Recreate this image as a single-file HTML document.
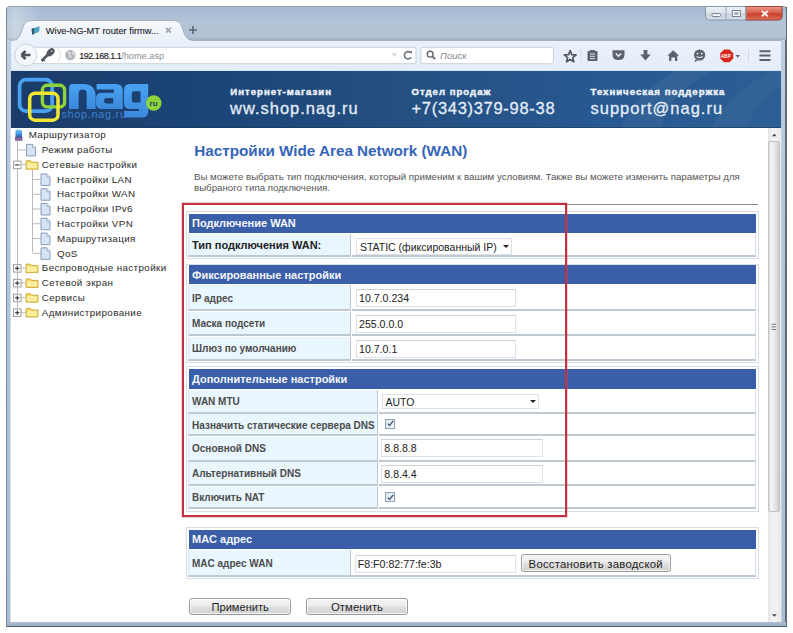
<!DOCTYPE html><html><head><meta charset="utf-8"><style>
html,body{margin:0;padding:0;}
body{width:793px;height:633px;position:relative;overflow:hidden;background:#fff;font-family:"Liberation Sans",sans-serif;}
div{box-sizing:border-box;}
</style></head><body>
<div style="position:absolute;left:6px;top:6px;width:781px;height:621px;background:linear-gradient(#c2d0e2 0%,#b4c6dc 30%,#a8bcd4 100%);border:1px solid #56606c;border-left-color:#7a8694;border-top-color:#9aa4ae;border-radius:4px 4px 0 0;"></div>
<div style="position:absolute;left:785px;top:7px;width:2px;height:620px;background:#626a74;border-radius:0 0 2px 0;"></div>
<div style="position:absolute;left:7px;top:622px;width:779px;height:4px;background:linear-gradient(#aebfd4,#98adc6);"></div>
<div style="position:absolute;left:10px;top:128px;width:1px;height:494px;background:#d3deea;"></div>
<div style="position:absolute;left:781px;top:128px;width:1px;height:494px;background:#c8d6e6;"></div>
<div style="position:absolute;left:7px;top:7px;width:779px;height:33px;background:linear-gradient(#a4b9d3 0%,#b3c4d8 45%,#b2c1d3 90%,#9fb0c2 100%);border-radius:3px 3px 0 0;"></div>
<div style="position:absolute;left:7px;top:7px;width:33px;height:33px;background:linear-gradient(90deg,rgba(255,255,255,0.12),rgba(255,255,255,0.3) 25%,rgba(255,255,255,0) 100%);"></div>
<div style="position:absolute;left:11px;top:40px;width:770px;height:31px;background:linear-gradient(#e9f1fa,#e4eef9);"></div>
<div style="position:absolute;left:186px;top:40px;width:595px;height:1px;background:#a3b1c0;"></div>
<div style="position:absolute;left:11px;top:70px;width:770px;height:1px;background:#d8e4f2;"></div>
<div style="position:absolute;left:11px;top:71px;width:770px;height:57px;background:linear-gradient(90deg,#1b3c6a 0%,#1b4477 25%,#244f80 50%,#285891 75%,#2c5f94 100%);"></div>
<svg style="position:absolute;left:11px;top:71px" width="770" height="57" viewBox="0 0 770 57"><path d="M610 57 Q625 20 665 0 H700 Q655 25 650 57 Z" fill="#ffffff" opacity="0.045"/><path d="M700 57 Q715 25 760 0 H770 V15 Q745 30 735 57 Z" fill="#ffffff" opacity="0.035"/></svg>
<div style="position:absolute;left:11px;top:127px;width:770px;height:1px;background:#1b3858;opacity:0.6;"></div>
<div style="position:absolute;left:11px;top:128px;width:757px;height:494px;background:#fff;"></div>
<div style="position:absolute;left:768px;top:128px;width:13px;height:494px;background:linear-gradient(90deg,#e4e4e4,#f1f1f1 30%,#f1f1f1 70%,#e8e8e8);"></div>
<div style="position:absolute;left:768.3px;top:141px;width:12.200000000000045px;height:371px;background:linear-gradient(90deg,#dcdcdc,#f6f6f6 25%,#e6e6e6 60%,#cdcdcd);border:1px solid #c4c4c4;border-radius:2px;"></div>
<svg style="position:absolute;left:768px;top:128px" width="13" height="494" viewBox="0 0 13 494"><path d="M3.8 8.3 L6.3 5.8 L8.8 8.3 Z" fill="#4a4a4a"/><path d="M3.8 486.3 L6.3 488.8 L8.8 486.3 Z" fill="#4a4a4a"/><path d="M3.5 196.3 H7.8 M3.5 198.9 H7.8 M3.5 201.5 H7.8" stroke="#7a7a7a" stroke-width="1"/></svg>
<svg style="position:absolute;left:0;top:0" width="793" height="72" viewBox="0 0 793 72">
<defs>
<linearGradient id="tabg" x1="0" y1="0" x2="0" y2="1"><stop offset="0" stop-color="#f7f9fc"/><stop offset="1" stop-color="#e9f1fa"/></linearGradient>
<linearGradient id="closeg" x1="0" y1="0" x2="0" y2="1"><stop offset="0" stop-color="#eb9a88"/><stop offset="0.45" stop-color="#d9604c"/><stop offset="0.55" stop-color="#c8402c"/><stop offset="1" stop-color="#e0705a"/></linearGradient>
<linearGradient id="btng" x1="0" y1="0" x2="0" y2="1"><stop offset="0" stop-color="#eef2f6"/><stop offset="0.5" stop-color="#dbe3ec"/><stop offset="0.55" stop-color="#c9d4e0"/><stop offset="1" stop-color="#d6e0ea"/></linearGradient>
</defs>
<!-- tab -->
<path d="M11 41.5 C18 41.5 20 36 22 30 C24.5 22 26 20.5 34 20.5 H171 C179 20.5 180.5 22 183 30 C185 36 187 40.5 194 40.5 V42 H11 Z" fill="url(#tabg)"/><path d="M11 40.5 C18 40.5 20 36 22 30 C24.5 22 26 20.5 34 20.5 H171 C179 20.5 180.5 22 183 30 C185 36 187 40.5 194 40.5" fill="none" stroke="#9fb0c4" stroke-width="1"/>
<!-- tab favicon -->
<path d="M31.6 28.8 L39.6 26.2 L39.2 31.4 L32.2 34.8 Z" fill="#4aa6bc"/>
<path d="M31.6 28.8 L34 28 L34.2 34 L32.2 34.8 Z" fill="#2c5a74"/>
<path d="M34.5 33.5 L39.2 31.4 L38 32.8 Z" fill="#8a9aa8"/>
<text x="45.8" y="33.5" font-family="Liberation Sans" font-size="9.3" fill="#1e1e1e" stroke="#1e1e1e" stroke-width="0.12">Wive-NG-MT router firmw...</text>
<path d="M166 27.8 L170.8 32.6 M170.8 27.8 L166 32.6" stroke="#9aa0a8" stroke-width="1.6"/>
<path d="M193 26 V34 M189 30 H197" stroke="#5a6672" stroke-width="1.7"/>
<!-- window controls -->
<path d="M705.5 6.5 H782 V16.5 Q782 20 778.5 20 H709 Q705.5 20 705.5 16.5 Z" fill="url(#btng)" stroke="#8795a5" stroke-width="1"/>
<path d="M746 6.5 H782 V16.5 Q782 20 778.5 20 H746 Z" fill="url(#closeg)" stroke="#9a4a40" stroke-width="1"/>
<path d="M726 7 V19.5 M746 7 V19.5" stroke="#9aa6b4" stroke-width="1"/>
<rect x="712" y="13.5" width="8.5" height="3" rx="1" fill="#f2f5f8" stroke="#6a7888" stroke-width="0.9"/>
<rect x="732.3" y="10.5" width="8" height="6" fill="#f2f5f8" stroke="#6a7888" stroke-width="0.9"/>
<rect x="734.3" y="12.5" width="4" height="2" fill="#8a98a8"/>
<path d="M761.8 11 L767.8 16.2 M767.8 11 L761.8 16.2" stroke="#f4f0ee" stroke-width="2"/>
<!-- URL bar -->
<rect x="22" y="47.3" width="394" height="16.4" rx="2" fill="#fff" stroke="#c9d1da" stroke-width="1"/>
<circle cx="25.9" cy="55" r="11" fill="#f4f7fb" stroke="#d0d6de" stroke-width="1"/>
<path d="M21.5 55 H30.5 M21.5 55 L25.5 51 M21.5 55 L25.5 59" stroke="#4e565f" stroke-width="2.6" fill="none"/>
<path d="M41.5 61 L48.5 54" stroke="#50575f" stroke-width="2.6"/>
<ellipse cx="50.6" cy="52.2" rx="4.6" ry="3.2" transform="rotate(-45 50.6 52.2)" fill="#50575f"/><circle cx="51.6" cy="51.2" r="0.9" fill="#b8bec6"/>
<path d="M42.8 59.3 L44.6 61.1" stroke="#50575f" stroke-width="1.6"/>
<path d="M57.5 48 L61 55 L57.5 62" stroke="#e2e6ea" stroke-width="1.2" fill="none"/>
<circle cx="70.3" cy="55" r="5.2" fill="#b4b8bd"/>
<path d="M67.5 51.5 Q69.5 52.5 70 54 Q69 56 71 57.5 M72 51.5 Q73.5 53 74 55" stroke="#eceef0" stroke-width="1.1" fill="none"/>
<text x="79.2" y="58.5" font-family="Liberation Sans" font-size="9" fill="#1a1a1a" letter-spacing="-0.5" stroke="#1a1a1a" stroke-width="0.15">192.168.1.1</text><text x="121.2" y="58.5" font-family="Liberation Sans" font-size="9.2" fill="#8a8f96">/home.asp</text>
<path d="M391.5 53 L394.3 57 L397 53 Z" fill="#c4c9ce"/><path d="M392.8 53.6 L394.3 55.6 L395.7 53.6 Z" fill="#fff"/>
<path d="M410.4 52.6 A3.6 3.6 0 1 0 411 57.2" stroke="#6f7780" stroke-width="1.6" fill="none"/>
<path d="M408.6 51 L411.8 51 L411.8 54.2 Z" fill="#6f7780"/>
<!-- search -->
<rect x="421" y="47.3" width="132.5" height="16.4" rx="2" fill="#fff" stroke="#c9d1da" stroke-width="1"/>
<circle cx="430.2" cy="54.2" r="2.9" fill="none" stroke="#5f6770" stroke-width="1.4"/>
<path d="M432.3 56.3 L435.2 59.2" stroke="#5f6770" stroke-width="1.7"/>
<text x="440" y="58.5" font-family="Liberation Sans" font-style="italic" font-size="9.5" fill="#868c93">Поиск</text>
<!-- toolbar icons -->
<path d="M570.20 50.60 L571.79 54.62 L576.10 54.88 L572.77 57.63 L573.84 61.82 L570.20 59.50 L566.56 61.82 L567.63 57.63 L564.30 54.88 L568.61 54.62 Z" fill="none" stroke="#505862" stroke-width="1.7" stroke-linejoin="round"/>
<path d="M581 49 V62" stroke="#d3d9e0" stroke-width="1"/>
<path d="M587.5 52 Q587.5 51 588.5 51 H590 V50 H595 V51 H596.5 Q597.5 51 597.5 52 V60 Q597.5 61 596.5 61 H588.5 Q587.5 61 587.5 60 Z" fill="#5a626c"/>
<path d="M590 54 H595 M590 56.3 H595 M590 58.6 H595" stroke="#eef3f9" stroke-width="0.9"/>
<path d="M612.5 50.3 H624.5 V54.5 Q624.5 60 618.5 60 Q612.5 60 612.5 54.5 Z" fill="#5a626c"/>
<path d="M615.8 53.5 L618.5 56.2 L621.2 53.5" stroke="#eef3f9" stroke-width="1.5" fill="none"/>
<path d="M643.6 50 H647.4 V54.5 H650.8 L645.5 60.5 L640.2 54.5 H643.6 Z" fill="#5a626c"/>
<path d="M673.2 50.3 L679 55.8 H677.3 V61 H675 V57.6 H671.4 V61 H669.1 V55.8 H667.4 Z" fill="#5a626c"/>
<circle cx="699.6" cy="55" r="5.6" fill="#5a626c"/>
<path d="M695.2 59.5 L694.6 62 L698 60.4 Z" fill="#5a626c"/>
<circle cx="697.5" cy="53.6" r="0.9" fill="#eef3f9"/><circle cx="701.7" cy="53.6" r="0.9" fill="#eef3f9"/>
<path d="M696.6 56.4 Q699.6 59 702.6 56.4" stroke="#eef3f9" stroke-width="1.1" fill="none"/>
<path d="M724 49.5 H729.5 L733.2 53.2 V58.6 L729.5 62.3 H724 L720.3 58.6 V53.2 Z" fill="#d8261c"/>
<text x="721" y="57.8" font-family="Liberation Sans" font-weight="bold" font-size="4.6" fill="#fff">ABP</text>
<path d="M735.5 55 H740 L737.75 57.7 Z" fill="#5a626c"/>
<path d="M748.5 49 V62" stroke="#d3d9e0" stroke-width="1"/>
<path d="M759.5 51.3 H770.5 M759.5 55.6 H770.5 M759.5 59.9 H770.5" stroke="#5a626c" stroke-width="2"/>
</svg>
<svg style="position:absolute;left:0;top:0" width="793" height="633" viewBox="0 0 793 633">
<defs><linearGradient id="nagg" x1="0" y1="0" x2="0" y2="1"><stop offset="0" stop-color="#4aa2f2"/><stop offset="1" stop-color="#3a88dc"/></linearGradient></defs>
<rect x="19.6" y="79.6" width="32.5" height="31.6" rx="6.5" fill="none" stroke="#48a2f0" stroke-width="3.7"/>
<rect x="42.4" y="85.2" width="22.2" height="21.7" rx="5" fill="none" stroke="#8cd43a" stroke-width="3.4"/>
<rect x="29.7" y="93.2" width="28.3" height="27" rx="5.5" fill="none" stroke="#f2e632" stroke-width="3.5"/>
<path d="M69 109 V88 Q69 84 73 84 H83 Q95.6 84 95.6 96 V109 H86.6 V93.5 Q86.6 89.4 82.6 89.4 Q78.6 89.4 78.6 93.5 V109 Z" fill="url(#nagg)"/>
<path d="M96.6 84 H116 Q122.8 84 122.8 91 V109 H101.8 Q96 109 96 103.5 V98.5 Q96 92.8 101.8 92.8 H114 V89.4 H96.6 Z M106.6 98 H113.2 V103.4 H106.6 Q104 103.4 104 100.7 Q104 98 106.6 98 Z" fill="url(#nagg)" fill-rule="evenodd"/>
<path d="M130 84 H148.2 V111.5 Q148.2 117.5 142.2 117.5 H124 V111 H139 V109 H130 Q124 109 124 103 V90 Q124 84 130 84 Z M134.6 91.3 H140.5 V102.6 H134.6 Q131.8 102.6 131.8 99.8 V94.1 Q131.8 91.3 134.6 91.3 Z" fill="url(#nagg)" fill-rule="evenodd"/>
<circle cx="153.8" cy="103" r="7.8" fill="#8cd43a"/>
<text x="149.6" y="105.8" font-family="Liberation Sans" font-weight="bold" font-size="8" fill="#1d3d6a">ru</text>
<text x="61.4" y="117.6" font-family="Liberation Sans" font-size="10.8" letter-spacing="0.75" fill="#3b7cc6" stroke="#3b7cc6" stroke-width="0.15">shop.nag.ru</text>
</svg>
<div style="position:absolute;left:230.3px;top:85.65px;white-space:nowrap;font-size:9.6px;line-height:11.04px;color:#eef3fa;font-weight:bold;letter-spacing:1.0px;-webkit-text-stroke:0.45px #eef3fa;">Интернет-магазин</div>
<div style="position:absolute;left:411.5px;top:85.65px;white-space:nowrap;font-size:9.6px;line-height:11.04px;color:#eef3fa;font-weight:bold;letter-spacing:1.0px;-webkit-text-stroke:0.45px #eef3fa;">Отдел продаж</div>
<div style="position:absolute;left:590.5px;top:85.65px;white-space:nowrap;font-size:9.6px;line-height:11.04px;color:#eef3fa;font-weight:bold;letter-spacing:1.0px;-webkit-text-stroke:0.45px #eef3fa;">Техническая поддержка</div>
<div style="position:absolute;left:230px;top:98.80px;white-space:nowrap;font-size:16.5px;line-height:18.97px;color:#e2ecf8;-webkit-text-stroke:0.3px #e2ecf8;letter-spacing:1px;">ww.shop.nag.ru</div>
<div style="position:absolute;left:411.5px;top:99.00px;white-space:nowrap;font-size:16.5px;line-height:18.97px;color:#e2ecf8;-webkit-text-stroke:0.3px #e2ecf8;letter-spacing:0.7px;">+7(343)379-98-38</div>
<div style="position:absolute;left:590.5px;top:98.80px;white-space:nowrap;font-size:16.5px;line-height:18.97px;color:#e2ecf8;-webkit-text-stroke:0.3px #e2ecf8;letter-spacing:1px;">support@nag.ru</div>
<div style="position:absolute;left:28.7px;top:129.37px;white-space:nowrap;font-size:9.8px;line-height:11.27px;color:#2a2a2a;letter-spacing:0.4px;">Маршрутизатор</div>
<div style="position:absolute;left:41.8px;top:144.15px;white-space:nowrap;font-size:9.8px;line-height:11.27px;color:#2a2a2a;letter-spacing:0.4px;">Режим работы</div>
<div style="position:absolute;left:41.8px;top:158.93px;white-space:nowrap;font-size:9.8px;line-height:11.27px;color:#2a2a2a;letter-spacing:0.4px;">Сетевые настройки</div>
<div style="position:absolute;left:57px;top:173.71px;white-space:nowrap;font-size:9.8px;line-height:11.27px;color:#2a2a2a;letter-spacing:0.4px;">Настройки LAN</div>
<div style="position:absolute;left:57px;top:188.49px;white-space:nowrap;font-size:9.8px;line-height:11.27px;color:#2a2a2a;letter-spacing:0.4px;">Настройки WAN</div>
<div style="position:absolute;left:57px;top:203.27px;white-space:nowrap;font-size:9.8px;line-height:11.27px;color:#2a2a2a;letter-spacing:0.4px;">Настройки IPv6</div>
<div style="position:absolute;left:57px;top:218.05px;white-space:nowrap;font-size:9.8px;line-height:11.27px;color:#2a2a2a;letter-spacing:0.4px;">Настройки VPN</div>
<div style="position:absolute;left:57px;top:232.83px;white-space:nowrap;font-size:9.8px;line-height:11.27px;color:#2a2a2a;letter-spacing:0.4px;">Маршрутизация</div>
<div style="position:absolute;left:57px;top:247.61px;white-space:nowrap;font-size:9.8px;line-height:11.27px;color:#2a2a2a;letter-spacing:0.4px;">QoS</div>
<div style="position:absolute;left:41.8px;top:262.39px;white-space:nowrap;font-size:9.8px;line-height:11.27px;color:#2a2a2a;letter-spacing:0.4px;">Беспроводные настройки</div>
<div style="position:absolute;left:41.8px;top:277.17px;white-space:nowrap;font-size:9.8px;line-height:11.27px;color:#2a2a2a;letter-spacing:0.4px;">Сетевой экран</div>
<div style="position:absolute;left:41.8px;top:291.95px;white-space:nowrap;font-size:9.8px;line-height:11.27px;color:#2a2a2a;letter-spacing:0.4px;">Сервисы</div>
<div style="position:absolute;left:41.8px;top:306.73px;white-space:nowrap;font-size:9.8px;line-height:11.27px;color:#2a2a2a;letter-spacing:0.4px;">Администрирование</div>
<svg style="position:absolute;left:0;top:0" width="200" height="340" viewBox="0 0 200 340"><path d="M17.5 141 V312" stroke="#b9b9b9" stroke-width="1" fill="none"/><path d="M32.5 170 V252.6" stroke="#b9b9b9" stroke-width="1" fill="none"/><defs><linearGradient id="cmpg" x1="0" y1="0" x2="0" y2="1"><stop offset="0" stop-color="#7cc8f4"/><stop offset="0.6" stop-color="#3a8ee0"/><stop offset="1" stop-color="#2a5aa8"/></linearGradient></defs><path d="M15.5 130 Q18.5 129 22 130.5 V137.5 H15.5 Z" fill="url(#cmpg)"/><path d="M15 137 H22.5 V140.8 H15 Z" fill="#6a4a8a" opacity="0.85"/><path d="M17.5 149.88000000000002 H26" stroke="#b9b9b9"/><path d="M26.5 144.38000000000002 H32.5 L35.5 147.38000000000002 V155.88000000000002 H26.5 Z" fill="#d6e4f6" stroke="#8c9cbc" stroke-width="1"/><path d="M32.5 144.38000000000002 V147.38000000000002 H35.5" fill="#f4f8fc" stroke="#8c9cbc" stroke-width="0.8"/><rect x="13.5" y="161.16000000000003" width="7.5" height="7.5" fill="#fff" stroke="#a0a0a0" stroke-width="1"/><path d="M15 164.91000000000003 H19.5" stroke="#222" stroke-width="1"/><path d="M21 164.66000000000003 H25.5" stroke="#b9b9b9"/><path d="M26.0 161.16000000000003 V169.16000000000003 H38.0 V162.16000000000003 H31.5 L30.5 160.66000000000003 H27.0 Z" fill="#f4dc6a" stroke="#cfae3e" stroke-width="1"/><rect x="27.0" y="163.16000000000003" width="10" height="5" fill="#fbeea0"/><path d="M32.5 179.44000000000003 H40.5" stroke="#b9b9b9"/><path d="M41.0 173.94000000000003 H47.0 L50.0 176.94000000000003 V185.44000000000003 H41.0 Z" fill="#d6e4f6" stroke="#8c9cbc" stroke-width="1"/><path d="M47.0 173.94000000000003 V176.94000000000003 H50.0" fill="#f4f8fc" stroke="#8c9cbc" stroke-width="0.8"/><path d="M32.5 194.22000000000003 H40.5" stroke="#b9b9b9"/><path d="M41.0 188.72000000000003 H47.0 L50.0 191.72000000000003 V200.22000000000003 H41.0 Z" fill="#d6e4f6" stroke="#8c9cbc" stroke-width="1"/><path d="M47.0 188.72000000000003 V191.72000000000003 H50.0" fill="#f4f8fc" stroke="#8c9cbc" stroke-width="0.8"/><path d="M32.5 209.0 H40.5" stroke="#b9b9b9"/><path d="M41.0 203.5 H47.0 L50.0 206.5 V215.0 H41.0 Z" fill="#d6e4f6" stroke="#8c9cbc" stroke-width="1"/><path d="M47.0 203.5 V206.5 H50.0" fill="#f4f8fc" stroke="#8c9cbc" stroke-width="0.8"/><path d="M32.5 223.78000000000003 H40.5" stroke="#b9b9b9"/><path d="M41.0 218.28000000000003 H47.0 L50.0 221.28000000000003 V229.78000000000003 H41.0 Z" fill="#d6e4f6" stroke="#8c9cbc" stroke-width="1"/><path d="M47.0 218.28000000000003 V221.28000000000003 H50.0" fill="#f4f8fc" stroke="#8c9cbc" stroke-width="0.8"/><path d="M32.5 238.56 H40.5" stroke="#b9b9b9"/><path d="M41.0 233.06 H47.0 L50.0 236.06 V244.56 H41.0 Z" fill="#d6e4f6" stroke="#8c9cbc" stroke-width="1"/><path d="M47.0 233.06 V236.06 H50.0" fill="#f4f8fc" stroke="#8c9cbc" stroke-width="0.8"/><path d="M32.5 253.34000000000003 H40.5" stroke="#b9b9b9"/><path d="M41.0 247.84000000000003 H47.0 L50.0 250.84000000000003 V259.34000000000003 H41.0 Z" fill="#d6e4f6" stroke="#8c9cbc" stroke-width="1"/><path d="M47.0 247.84000000000003 V250.84000000000003 H50.0" fill="#f4f8fc" stroke="#8c9cbc" stroke-width="0.8"/><rect x="13.5" y="264.62" width="7.5" height="7.5" fill="#fff" stroke="#a0a0a0" stroke-width="1"/><path d="M15 268.37 H19.5" stroke="#222" stroke-width="1"/><path d="M17.25 266.12 V270.62" stroke="#222" stroke-width="1"/><path d="M21 268.12 H25.5" stroke="#b9b9b9"/><path d="M26.0 264.62 V272.62 H38.0 V265.62 H31.5 L30.5 264.12 H27.0 Z" fill="#f4dc6a" stroke="#cfae3e" stroke-width="1"/><rect x="27.0" y="266.62" width="10" height="5" fill="#fbeea0"/><rect x="13.5" y="279.40000000000003" width="7.5" height="7.5" fill="#fff" stroke="#a0a0a0" stroke-width="1"/><path d="M15 283.15000000000003 H19.5" stroke="#222" stroke-width="1"/><path d="M17.25 280.90000000000003 V285.40000000000003" stroke="#222" stroke-width="1"/><path d="M21 282.90000000000003 H25.5" stroke="#b9b9b9"/><path d="M26.0 279.40000000000003 V287.40000000000003 H38.0 V280.40000000000003 H31.5 L30.5 278.90000000000003 H27.0 Z" fill="#f4dc6a" stroke="#cfae3e" stroke-width="1"/><rect x="27.0" y="281.40000000000003" width="10" height="5" fill="#fbeea0"/><rect x="13.5" y="294.18" width="7.5" height="7.5" fill="#fff" stroke="#a0a0a0" stroke-width="1"/><path d="M15 297.93 H19.5" stroke="#222" stroke-width="1"/><path d="M17.25 295.68 V300.18" stroke="#222" stroke-width="1"/><path d="M21 297.68 H25.5" stroke="#b9b9b9"/><path d="M26.0 294.18 V302.18 H38.0 V295.18 H31.5 L30.5 293.68 H27.0 Z" fill="#f4dc6a" stroke="#cfae3e" stroke-width="1"/><rect x="27.0" y="296.18" width="10" height="5" fill="#fbeea0"/><rect x="13.5" y="308.96" width="7.5" height="7.5" fill="#fff" stroke="#a0a0a0" stroke-width="1"/><path d="M15 312.71 H19.5" stroke="#222" stroke-width="1"/><path d="M17.25 310.46 V314.96" stroke="#222" stroke-width="1"/><path d="M21 312.46 H25.5" stroke="#b9b9b9"/><path d="M26.0 308.96 V316.96 H38.0 V309.96 H31.5 L30.5 308.46 H27.0 Z" fill="#f4dc6a" stroke="#cfae3e" stroke-width="1"/><rect x="27.0" y="310.96" width="10" height="5" fill="#fbeea0"/></svg>
<div style="position:absolute;left:194.3px;top:141.95px;white-space:nowrap;font-size:15.25px;line-height:17.54px;font-weight:bold;color:#3565b9;">Настройки Wide Area Network (WAN)</div>
<div style="position:absolute;left:194px;top:170.86px;white-space:nowrap;font-size:9.7px;line-height:11.15px;color:#555;">Вы можете выбрать тип подключения, который применим к вашим условиям. Также вы можете изменить параметры для</div>
<div style="position:absolute;left:194px;top:181.56px;white-space:nowrap;font-size:9.7px;line-height:11.15px;color:#555;">выбраного типа подключения.</div>
<div style="position:absolute;left:186px;top:204px;width:572px;height:1px;background:#8a8a8a;"></div>
<div style="position:absolute;left:186px;top:211.2px;width:573px;height:47.80000000000001px;border:1px solid #d8dee6;background:#fff;"></div>
<div style="position:absolute;left:188.8px;top:213.5px;width:566.8px;height:19.19999999999999px;background:#3a5ea8;"></div>
<div style="position:absolute;left:192px;top:217.26px;white-space:nowrap;font-size:11px;line-height:12.65px;font-weight:bold;color:#f4f7fc;">Подключение WAN</div>
<div style="position:absolute;left:188.3px;top:234.0px;width:163.2px;height:23.100000000000023px;background:#e9f6fd;border-left:1px solid #dde2f2;border-right:1px solid #bec9d3;border-bottom:2px solid #bec9d3;"></div>
<div style="position:absolute;left:351.5px;top:234.0px;width:404.29999999999995px;height:23.100000000000023px;background:#fff;border-bottom:2px solid #bec9d3;border-right:1px solid #d6dce2;"></div>
<div style="position:absolute;left:192px;top:239.16px;white-space:nowrap;font-size:11px;line-height:12.65px;font-weight:bold;color:#222;">Тип подключения WAN:</div>
<div style="position:absolute;left:356.4px;top:237.6px;width:155.60000000000002px;height:17.599999999999994px;border:1px solid #e0e3e6;background:#fff;"></div>
<div style="position:absolute;left:359.9px;top:240.72px;white-space:nowrap;font-size:10.5px;line-height:12.07px;color:#222;">STATIC (фиксированный IP)</div>
<div style="position:absolute;left:503px;top:244.89999999999998px;width:0;height:0;border-left:3px solid transparent;border-right:3px solid transparent;border-top:3px solid #222;"></div>
<div style="position:absolute;left:186px;top:263.5px;width:573px;height:99.69999999999999px;border:1px solid #d8dee6;background:#fff;"></div>
<div style="position:absolute;left:188.8px;top:265.2px;width:566.8px;height:18.80000000000001px;background:#3a5ea8;"></div>
<div style="position:absolute;left:192px;top:268.56px;white-space:nowrap;font-size:11px;line-height:12.65px;font-weight:bold;color:#f4f7fc;">Фиксированные настройки</div>
<div style="position:absolute;left:188.3px;top:285.3px;width:163.2px;height:26.100000000000023px;background:#e9f6fd;border-left:1px solid #dde2f2;border-right:1px solid #bec9d3;border-bottom:2px solid #bec9d3;"></div>
<div style="position:absolute;left:351.5px;top:285.3px;width:404.29999999999995px;height:26.100000000000023px;background:#fff;border-bottom:2px solid #bec9d3;border-right:1px solid #d6dce2;"></div>
<div style="position:absolute;left:192px;top:292.78px;white-space:nowrap;font-size:10px;line-height:11.50px;font-weight:bold;color:#4c4c4c;">IP адрес</div>
<div style="position:absolute;left:188.3px;top:312.1px;width:163.2px;height:24.30000000000001px;background:#e9f6fd;border-left:1px solid #dde2f2;border-right:1px solid #bec9d3;border-bottom:2px solid #bec9d3;"></div>
<div style="position:absolute;left:351.5px;top:312.1px;width:404.29999999999995px;height:24.30000000000001px;background:#fff;border-bottom:2px solid #bec9d3;border-right:1px solid #d6dce2;"></div>
<div style="position:absolute;left:192px;top:318.28px;white-space:nowrap;font-size:10px;line-height:11.50px;font-weight:bold;color:#4c4c4c;">Маска подсети</div>
<div style="position:absolute;left:188.3px;top:337.1px;width:163.2px;height:24.0px;background:#e9f6fd;border-left:1px solid #dde2f2;border-right:1px solid #bec9d3;border-bottom:2px solid #bec9d3;"></div>
<div style="position:absolute;left:351.5px;top:337.1px;width:404.29999999999995px;height:24.0px;background:#fff;border-bottom:2px solid #bec9d3;border-right:1px solid #d6dce2;"></div>
<div style="position:absolute;left:192px;top:342.98px;white-space:nowrap;font-size:10px;line-height:11.50px;font-weight:bold;color:#4c4c4c;">Шлюз по умолчанию</div>
<div style="position:absolute;left:356px;top:289px;width:160.29999999999995px;height:18.19999999999999px;border:1px solid #dfe2e5;border-top-color:#cdd1d6;background:#fff;"></div>
<div style="position:absolute;left:359px;top:292.33px;white-space:nowrap;font-size:10.6px;line-height:12.19px;color:#222;">10.7.0.234</div>
<div style="position:absolute;left:356px;top:314.5px;width:160.29999999999995px;height:18.19999999999999px;border:1px solid #dfe2e5;border-top-color:#cdd1d6;background:#fff;"></div>
<div style="position:absolute;left:359px;top:317.83px;white-space:nowrap;font-size:10.6px;line-height:12.19px;color:#222;">255.0.0.0</div>
<div style="position:absolute;left:356px;top:339.5px;width:160.29999999999995px;height:18.19999999999999px;border:1px solid #dfe2e5;border-top-color:#cdd1d6;background:#fff;"></div>
<div style="position:absolute;left:359px;top:342.83px;white-space:nowrap;font-size:10.6px;line-height:12.19px;color:#222;">10.7.0.1</div>
<div style="position:absolute;left:186px;top:366.4px;width:573px;height:145.60000000000002px;border:1px solid #d8dee6;background:#fff;"></div>
<div style="position:absolute;left:188.8px;top:369.4px;width:566.8px;height:19.5px;background:#3a5ea8;"></div>
<div style="position:absolute;left:192px;top:373.46px;white-space:nowrap;font-size:11px;line-height:12.65px;font-weight:bold;color:#f4f7fc;">Дополнительные настройки</div>
<div style="position:absolute;left:188.3px;top:390.2px;width:190.2px;height:23.400000000000034px;background:#e9f6fd;border-left:1px solid #dde2f2;border-right:1px solid #bec9d3;border-bottom:2px solid #bec9d3;"></div>
<div style="position:absolute;left:378.5px;top:390.2px;width:377.29999999999995px;height:23.400000000000034px;background:#fff;border-bottom:2px solid #bec9d3;border-right:1px solid #d6dce2;"></div>
<div style="position:absolute;left:192px;top:395.58px;white-space:nowrap;font-size:10px;line-height:11.50px;font-weight:bold;color:#4c4c4c;">WAN MTU</div>
<div style="position:absolute;left:188.3px;top:414.3px;width:190.2px;height:21.80000000000001px;background:#e9f6fd;border-left:1px solid #dde2f2;border-right:1px solid #bec9d3;border-bottom:2px solid #bec9d3;"></div>
<div style="position:absolute;left:378.5px;top:414.3px;width:377.29999999999995px;height:21.80000000000001px;background:#fff;border-bottom:2px solid #bec9d3;border-right:1px solid #d6dce2;"></div>
<div style="position:absolute;left:192px;top:419.58px;white-space:nowrap;font-size:10px;line-height:11.50px;font-weight:bold;color:#4c4c4c;">Назначить статические сервера DNS</div>
<div style="position:absolute;left:188.3px;top:436.8px;width:190.2px;height:24.80000000000001px;background:#e9f6fd;border-left:1px solid #dde2f2;border-right:1px solid #bec9d3;border-bottom:2px solid #bec9d3;"></div>
<div style="position:absolute;left:378.5px;top:436.8px;width:377.29999999999995px;height:24.80000000000001px;background:#fff;border-bottom:2px solid #bec9d3;border-right:1px solid #d6dce2;"></div>
<div style="position:absolute;left:192px;top:443.48px;white-space:nowrap;font-size:10px;line-height:11.50px;font-weight:bold;color:#4c4c4c;">Основной DNS</div>
<div style="position:absolute;left:188.3px;top:462.3px;width:190.2px;height:23.69999999999999px;background:#e9f6fd;border-left:1px solid #dde2f2;border-right:1px solid #bec9d3;border-bottom:2px solid #bec9d3;"></div>
<div style="position:absolute;left:378.5px;top:462.3px;width:377.29999999999995px;height:23.69999999999999px;background:#fff;border-bottom:2px solid #bec9d3;border-right:1px solid #d6dce2;"></div>
<div style="position:absolute;left:192px;top:467.78px;white-space:nowrap;font-size:10px;line-height:11.50px;font-weight:bold;color:#4c4c4c;">Альтернативный DNS</div>
<div style="position:absolute;left:188.3px;top:486.7px;width:190.2px;height:22.5px;background:#e9f6fd;border-left:1px solid #dde2f2;border-right:1px solid #bec9d3;border-bottom:2px solid #bec9d3;"></div>
<div style="position:absolute;left:378.5px;top:486.7px;width:377.29999999999995px;height:22.5px;background:#fff;border-bottom:2px solid #bec9d3;border-right:1px solid #d6dce2;"></div>
<div style="position:absolute;left:192px;top:492.18px;white-space:nowrap;font-size:10px;line-height:11.50px;font-weight:bold;color:#4c4c4c;">Включить NAT</div>
<div style="position:absolute;left:382px;top:393.8px;width:156.5px;height:15.199999999999989px;border:1px solid #e0e3e6;background:#fff;"></div>
<div style="position:absolute;left:385.5px;top:395.72px;white-space:nowrap;font-size:10.5px;line-height:12.07px;color:#222;">AUTO</div>
<div style="position:absolute;left:529.5px;top:399.9px;width:0;height:0;border-left:3px solid transparent;border-right:3px solid transparent;border-top:3px solid #222;"></div>
<div style="position:absolute;left:385px;top:418.8px;width:10px;height:10.0px;border:1px solid #8f9fb4;background:linear-gradient(135deg,#dfe6ef,#f6f8fb);"></div>
<svg style="position:absolute;left:387px;top:420.3px" width="7" height="7" viewBox="0 0 7 7"><path d="M0.8 3.6 L2.6 5.6 L6.2 0.8" fill="none" stroke="#3a4e7a" stroke-width="1.3"/></svg>
<div style="position:absolute;left:381.3px;top:439.2px;width:162.2px;height:17.69999999999999px;border:1px solid #dfe2e5;border-top-color:#cdd1d6;background:#fff;"></div>
<div style="position:absolute;left:384.3px;top:442.28px;white-space:nowrap;font-size:10.6px;line-height:12.19px;color:#222;">8.8.8.8</div>
<div style="position:absolute;left:381.3px;top:465.2px;width:162.2px;height:17.69999999999999px;border:1px solid #dfe2e5;border-top-color:#cdd1d6;background:#fff;"></div>
<div style="position:absolute;left:384.3px;top:468.28px;white-space:nowrap;font-size:10.6px;line-height:12.19px;color:#222;">8.8.4.4</div>
<div style="position:absolute;left:385px;top:492.2px;width:10px;height:10.0px;border:1px solid #8f9fb4;background:linear-gradient(135deg,#dfe6ef,#f6f8fb);"></div>
<svg style="position:absolute;left:387px;top:493.7px" width="7" height="7" viewBox="0 0 7 7"><path d="M0.8 3.6 L2.6 5.6 L6.2 0.8" fill="none" stroke="#3a4e7a" stroke-width="1.3"/></svg>
<div style="position:absolute;left:182.2px;top:203px;width:384.50000000000006px;height:313.79999999999995px;border:2px solid #c3303f;box-shadow:0 0 0 0.6px rgba(220,90,105,0.45);"></div>
<div style="position:absolute;left:186px;top:526.8px;width:573px;height:52.200000000000045px;border:1px solid #d8dee6;background:#fff;"></div>
<div style="position:absolute;left:188.8px;top:530px;width:566.8px;height:18.5px;background:#3a5ea8;"></div>
<div style="position:absolute;left:192px;top:533.06px;white-space:nowrap;font-size:11px;line-height:12.65px;font-weight:bold;color:#f4f7fc;">MAC адрес</div>
<div style="position:absolute;left:188.3px;top:549.8px;width:162.5px;height:27.0px;background:#e9f6fd;border-left:1px solid #dde2f2;border-right:1px solid #bec9d3;border-bottom:2px solid #bec9d3;"></div>
<div style="position:absolute;left:350.8px;top:549.8px;width:404.99999999999994px;height:27.0px;background:#fff;border-bottom:2px solid #bec9d3;border-right:1px solid #d6dce2;"></div>
<div style="position:absolute;left:192px;top:558.39px;white-space:nowrap;font-size:10px;line-height:11.50px;font-weight:bold;color:#4c4c4c;">MAC адрес WAN</div>
<div style="position:absolute;left:354.8px;top:554.5px;width:161.2px;height:18.200000000000045px;border:1px solid #dfe2e5;border-top-color:#cdd1d6;background:#fff;"></div>
<div style="position:absolute;left:357.8px;top:557.83px;white-space:nowrap;font-size:10.6px;line-height:12.19px;color:#222;">F8:F0:82:77:fe:3b</div>
<div style="position:absolute;left:520.5px;top:554.4px;width:150.5px;height:18.100000000000023px;border:1px solid #9a9a9a;border-radius:3px;background:linear-gradient(#f4f4f4 0%,#ececec 45%,#dedede 55%,#d2d2d2 100%);box-shadow:inset 0 0 0 1px rgba(255,255,255,0.7);"></div>
<div style="position:absolute;left:520.5px;top:555.4px;width:150.5px;height:18.100000000000023px;line-height:18.100000000000023px;text-align:center;font-size:11.3px;letter-spacing:0.25px;color:#1e1e1e;white-space:nowrap;">Восстановить заводской</div>
<div style="position:absolute;left:189px;top:598px;width:102.39999999999998px;height:17.299999999999955px;border:1px solid #9a9a9a;border-radius:3px;background:linear-gradient(#f4f4f4 0%,#ececec 45%,#dedede 55%,#d2d2d2 100%);box-shadow:inset 0 0 0 1px rgba(255,255,255,0.7);"></div>
<div style="position:absolute;left:189px;top:599px;width:102.39999999999998px;height:17.299999999999955px;line-height:17.299999999999955px;text-align:center;font-size:11.1px;letter-spacing:0px;color:#1e1e1e;white-space:nowrap;">Применить</div>
<div style="position:absolute;left:305.6px;top:598px;width:102.89999999999998px;height:17.299999999999955px;border:1px solid #9a9a9a;border-radius:3px;background:linear-gradient(#f4f4f4 0%,#ececec 45%,#dedede 55%,#d2d2d2 100%);box-shadow:inset 0 0 0 1px rgba(255,255,255,0.7);"></div>
<div style="position:absolute;left:305.6px;top:599px;width:102.89999999999998px;height:17.299999999999955px;line-height:17.299999999999955px;text-align:center;font-size:11.4px;letter-spacing:0px;color:#1e1e1e;white-space:nowrap;">Отменить</div>
</body></html>
